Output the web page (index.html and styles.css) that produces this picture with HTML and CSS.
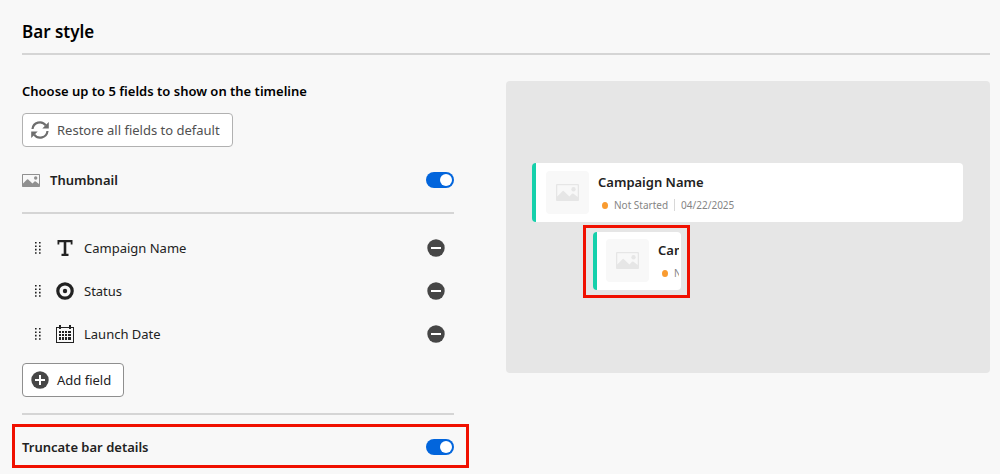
FILE: index.html
```html
<!DOCTYPE html>
<html lang="en">
<head>
<meta charset="utf-8">
<meta name="viewport" content="width=device-width, initial-scale=1">
<title>Bar style</title>
<link rel="stylesheet" href="styles.css">
</head>
<body>
<svg class="sprite" aria-hidden="true">
  <symbol id="picture" viewBox="0 0 18 13" preserveAspectRatio="none">
    <path fill-rule="evenodd" d="M.7 0h16.600q.7 0 .7.7v11.600q0 .7-.7.700H.7q-.7 0-.7-.7V.7Q0 0 .7 0zM1 1v8.500l4-4q.6-.5 1.200 0l4.300 4 2-2q.6-.5 1.200 0l3.300 2.500V1z"/>
    <circle cx="13.700" cy="4" r="1.700"/>
  </symbol>
  <symbol id="grip" viewBox="0 0 6 12">
    <path d="M0 0h1.600v1.600H0zM4 0h1.600v1.600H4zM0 3.400h1.600V5H0zM4 3.400h1.600V5H4zM0 6.800h1.600v1.600H0zM4 6.800h1.600v1.600H4zM0 10.200h1.600v1.600H0zM4 10.200h1.600v1.600H4z"/>
  </symbol>
  <symbol id="minus" viewBox="0 0 18 18">
    <circle cx="9" cy="9" r="8.700"/>
    <path fill="#fff" d="M4 8h10v2H4z"/>
  </symbol>
</svg>
<main class="page">
  <h1 class="title">Bar style</h1>
  <div class="columns">
    <section class="settings">
      <h2 class="subtitle">Choose up to 5 fields to show on the timeline</h2>
      <button class="button button-muted" type="button">
        <svg class="icon" viewBox="0 0 18 18" aria-hidden="true">
          <path fill="none" stroke="currentColor" stroke-width="2.200" d="M1.500 8A7.400 7.400 0 0 1 14.800 4.400M16.500 10A7.400 7.400 0 0 1 3.200 13.600"/>
          <path d="M17.800 1v6.500h-6.500zM.2 17v-6.500h6.500z"/>
        </svg>
        Restore all fields to default
      </button>
      <div class="toggle-row">
        <svg class="thumb-icon" aria-hidden="true"><use href="#picture"/></svg>
        <label class="toggle-label" for="thumbnail">Thumbnail</label>
        <input class="switch" id="thumbnail" type="checkbox" role="switch" checked>
      </div>
      <ul class="fields">
        <li class="field">
          <svg class="grip" aria-hidden="true"><use href="#grip"/></svg>
          <svg class="icon" viewBox="0 0 18 18" aria-hidden="true"><path d="M1.500 1h15v4.500h-1.800V3.200h-4.400v11.600h2.200V17h-7v-2.200h2.200V3.200H3.300v2.300H1.500z"/></svg>
          <span class="field-name">Campaign Name</span>
          <button class="remove" type="button" aria-label="Remove Campaign Name"><svg class="icon"><use href="#minus"/></svg></button>
        </li>
        <li class="field">
          <svg class="grip" aria-hidden="true"><use href="#grip"/></svg>
          <svg class="icon" viewBox="0 0 18 18" aria-hidden="true"><circle cx="9" cy="9" r="7.200" fill="none" stroke="currentColor" stroke-width="3.200"/><circle cx="9" cy="9" r="2.200"/></svg>
          <span class="field-name">Status</span>
          <button class="remove" type="button" aria-label="Remove Status"><svg class="icon"><use href="#minus"/></svg></button>
        </li>
        <li class="field">
          <svg class="grip" aria-hidden="true"><use href="#grip"/></svg>
          <svg class="icon" viewBox="0 0 18 18" aria-hidden="true">
            <path fill-rule="evenodd" d="M0 2h3V0h2v2h8V0h2v2h3v16H0zM1 3v14h16V3h-2v1h-2V3H5v1H3V3z"/>
            <path d="M3 6h2v2H3zM6 6h2v2H6zM9 6h2v2H9zM12 6h3v2h-3zM3 9h2v2H3zM6 9h2v2H6zM9 9h2v2H9zM12 9h3v2h-3zM3 12h2v3H3zM6 12h2v3H6zM9 12h2v3H9zM12 12h3v3h-3z"/>
          </svg>
          <span class="field-name">Launch Date</span>
          <button class="remove" type="button" aria-label="Remove Launch Date"><svg class="icon"><use href="#minus"/></svg></button>
        </li>
      </ul>
      <button class="button" type="button">
        <svg class="icon icon-dark" viewBox="0 0 18 18" aria-hidden="true"><circle cx="9" cy="9" r="8.700"/><path fill="#fff" d="M8 4h2v4h4v2h-4v4H8v-4H4V8h4z"/></svg>
        Add field
      </button>
      <div class="truncate">
        <label class="toggle-label" for="truncate">Truncate bar details</label>
        <input class="switch" id="truncate" type="checkbox" role="switch" checked>
      </div>
    </section>
    <section class="preview" aria-label="Preview">
      <article class="card">
        <div class="thumb"><svg class="thumb-picture" aria-hidden="true"><use href="#picture"/></svg></div>
        <div class="details">
          <h3 class="card-title">Campaign Name</h3>
          <div class="meta"><span class="dot"></span><span>Not Started</span><span class="date">04/22/2025</span></div>
        </div>
      </article>
      <div class="short-frame">
        <article class="card card-short">
          <div class="thumb"><svg class="thumb-picture" aria-hidden="true"><use href="#picture"/></svg></div>
          <div class="details">
            <h3 class="card-title">Campaign Name</h3>
            <div class="meta"><span class="dot"></span><span>Not Started</span></div>
          </div>
        </article>
      </div>
    </section>
  </div>
</main>
</body>
</html>
```

FILE: styles.css
```css
* { box-sizing: border-box; }
body {
  margin: 0;
  background: #f8f8f8;
  color: #222;
  font: 13px/20px "Noto Sans", "Open Sans", sans-serif;
}
svg { display: block; flex: none; fill: currentColor; }
.sprite { position: absolute; width: 0; height: 0; }
.page { padding: 20px 10px 6px 22px; }
.title {
  margin: 0;
  padding-bottom: 9px;
  border-bottom: 2px solid #d5d5d5;
  color: #000;
  font-size: 17px;
  line-height: 24px;
  font-weight: 600;
}
.columns {
  display: grid;
  grid-template-columns: 432fr 484fr;
  gap: 52px;
  align-items: start;
  padding-top: 26px;
}
.settings { min-width: 0; }
.subtitle {
  margin: 0 0 12px;
  color: #000;
  font-size: 13px;
  line-height: 20px;
  font-weight: 600;
}
.button {
  display: flex;
  align-items: center;
  gap: 8px;
  height: 34px;
  padding: 0 12px 0 8px;
  border: 1px solid #8f8f8f;
  border-radius: 4px;
  background: #fff;
  color: #222;
  font: inherit;
}
.button-muted { border-color: #b1b1b1; color: #505050; }
.button-muted .icon { color: #6e6e6e; }
.icon { width: 18px; height: 18px; }
.icon-dark { color: #464646; }
.toggle-row {
  display: flex;
  align-items: center;
  gap: 10px;
  padding: 23px 0 22px;
  border-bottom: 2px solid #d5d5d5;
}
.thumb-icon { width: 18px; height: 13px; color: #909090; }
.toggle-label { flex: 1; font-weight: 600; }
.switch {
  appearance: none;
  display: flex;
  flex: none;
  width: 28px;
  height: 16px;
  margin: 0;
  padding: 2px;
  border-radius: 8px;
  background: #0265dc;
}
.switch::before {
  content: "";
  width: 12px;
  height: 12px;
  border-radius: 50%;
  background: #fff;
}
.switch:checked { justify-content: flex-end; }
.fields { margin: 0; padding: 12px 0 8px; list-style: none; }
.field { display: flex; align-items: center; height: 43px; padding: 0 9px 0 13px; }
.grip { width: 6px; height: 12px; margin-right: 15px; }
.field-name { flex: 1; margin-left: 10px; }
.remove { padding: 0; border: 0; background: none; color: #464646; }
.truncate {
  position: relative;
  display: flex;
  align-items: center;
  height: 44px;
  margin: 27px -15px 0 -10px;
  padding: 2px 12px 0 7px;
  border: 3px solid #f01000;
}
.truncate::before {
  content: "";
  position: absolute;
  top: -14px;
  left: 7px;
  right: 12px;
  height: 2px;
  background: #d5d5d5;
}
.preview {
  min-height: 292px;
  min-width: 0;
  padding: 82px 27px 75px 26px;
  border-radius: 4px;
  background: #e6e6e6;
}
.card {
  display: flex;
  height: 59px;
  padding: 8px 10px;
  border-left: 4px solid #15d0ab;
  border-radius: 4px;
  background: #fff;
  overflow: hidden;
}
.thumb {
  display: grid;
  flex: none;
  place-items: center;
  width: 43px;
  height: 43px;
  border-radius: 4px;
  background: #f8f8f8;
  color: #e6e6e6;
}
.thumb-picture { width: 23px; height: 17px; }
.details { flex: 1; min-width: 0; margin-left: 9px; overflow: hidden; white-space: nowrap; }
.card-title { margin: 0; padding-top: 1px; font-size: 13px; line-height: 20px; font-weight: 600; }
.meta {
  display: flex;
  align-items: center;
  gap: 6px;
  padding: 3px 0 0 4px;
  color: #858585;
  font-size: 10px;
  line-height: 20px;
}
.dot { flex: none; width: 6px; height: 7px; border-radius: 50%; background: #f99b30; }
.date { padding-left: 6px; border-left: 1px solid #d8d8d8; line-height: 12px; }
.short-frame {
  width: 107px;
  margin: 3px 0 0 51px;
  padding: 4px 6px 5px 7px;
  border: 3px solid #f01000;
}
.card-short { height: 58px; padding: 7px 2px 8px 9px; }
```
